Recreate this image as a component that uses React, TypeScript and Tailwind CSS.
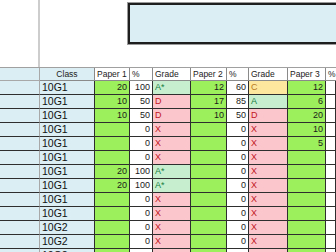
import React from "react";

type Row = [string, string, string, string, string, string, string, string];

const rows: Row[] = [
  ["10G1", "20", "100", "A*", "12", "60", "C", "12"],
  ["10G1", "10", "50", "D", "17", "85", "A", "6"],
  ["10G1", "10", "50", "D", "10", "50", "D", "20"],
  ["10G1", "", "0", "X", "", "0", "X", "10"],
  ["10G1", "", "0", "X", "", "0", "X", "5"],
  ["10G1", "", "0", "X", "", "0", "X", ""],
  ["10G1", "20", "100", "A*", "", "0", "X", ""],
  ["10G1", "20", "100", "A*", "", "0", "X", ""],
  ["10G1", "", "0", "X", "", "0", "X", ""],
  ["10G1", "", "0", "X", "", "0", "X", ""],
  ["10G2", "", "0", "X", "", "0", "X", ""],
  ["10G2", "", "0", "X", "", "0", "X", ""],
  ["10G2", "", "0", "X", "", "0", "X", ""],
];

const gradeClass = (g: string) => {
  if (g === "A*" || g === "A") return "bg-[#c8eed0] text-[#15803d]";
  if (g === "C") return "bg-[#fde69d] text-[#b7791f]";
  return "bg-[#fcc6cd] text-[#c0141e]";
};

const grid =
  "grid grid-cols-[40px_55px_35px_23px_38px_36px_22px_39px_38px_1fr]";

const cell = "border-r border-b border-[#2e2e2e] h-[14px] flex items-center overflow-hidden";

function Header() {
  const h = "border-r border-b border-[#8a8a8a] h-[13px] flex items-center text-[8.5px] text-[#222] pl-[2px] bg-white";
  return (
    <div className={grid + " border-t border-[#a0a0a0]"}>
      <div className="border-r border-b border-[#a8a8a8] h-[13px] bg-[#daeef3]" />
      <div className="border-r border-b border-[#8a8a8a] h-[13px] bg-[#daeef3] flex items-center justify-center text-[8.5px] text-[#222]">
        Class
      </div>
      <div className={h}>Paper 1</div>
      <div className={h}>%</div>
      <div className={h}>Grade</div>
      <div className={h}>Paper 2</div>
      <div className={h}>%</div>
      <div className={h}>Grade</div>
      <div className={h}>Paper 3</div>
      <div className={h}>%</div>
    </div>
  );
}

function DataRow({ r }: { r: Row }) {
  const [cls, p1, pc1, g1, p2, pc2, g2, p3] = r;
  const num = "justify-end pr-[2px] text-[9px] text-[#1a1a1a]";
  return (
    <div className={grid}>
      <div className="border-r border-b border-r-[#a8a8a8] border-b-[#2e2e2e] h-[14px] bg-[#daeef3]" />
      <div className={cell + " bg-[#daeef3] pl-[2px] text-[10.5px] text-[#111]"}>{cls}</div>
      <div className={cell + " bg-[#9cf05c] " + num}>{p1}</div>
      <div className={cell + " bg-white " + num}>{pc1}</div>
      <div className={cell + " pl-[2px] text-[9px] " + gradeClass(g1)}>{g1}</div>
      <div className={cell + " bg-[#9cf05c] " + num}>{p2}</div>
      <div className={cell + " bg-white " + num}>{pc2}</div>
      <div className={cell + " pl-[2px] text-[9px] " + gradeClass(g2)}>{g2}</div>
      <div className={cell + " bg-[#9cf05c] " + num}>{p3}</div>
      <div className={cell + " bg-white"} />
    </div>
  );
}

export default function App() {
  return (
    <div
      className="w-[336px] h-[252px] overflow-hidden bg-white"
      style={{ fontFamily: '"Liberation Sans", Arial, sans-serif' }}
    >
      <div className="flex h-[67px] overflow-hidden">
        <div className="w-[40px] shrink-0 border-r-2 border-[#cdcdcd]" />
        <div className="w-[88px] shrink-0" />
        <div className="mt-[3px] h-[41px] w-[260px] shrink-0 border-2 border-[#1e1e1e] bg-[#dbeef3] shadow-[0_0_0_1px_#9a9a9a]" />
      </div>
      <Header />
      {rows.map((r, i) => (
        <DataRow key={i} r={r} />
      ))}
    </div>
  );
}
